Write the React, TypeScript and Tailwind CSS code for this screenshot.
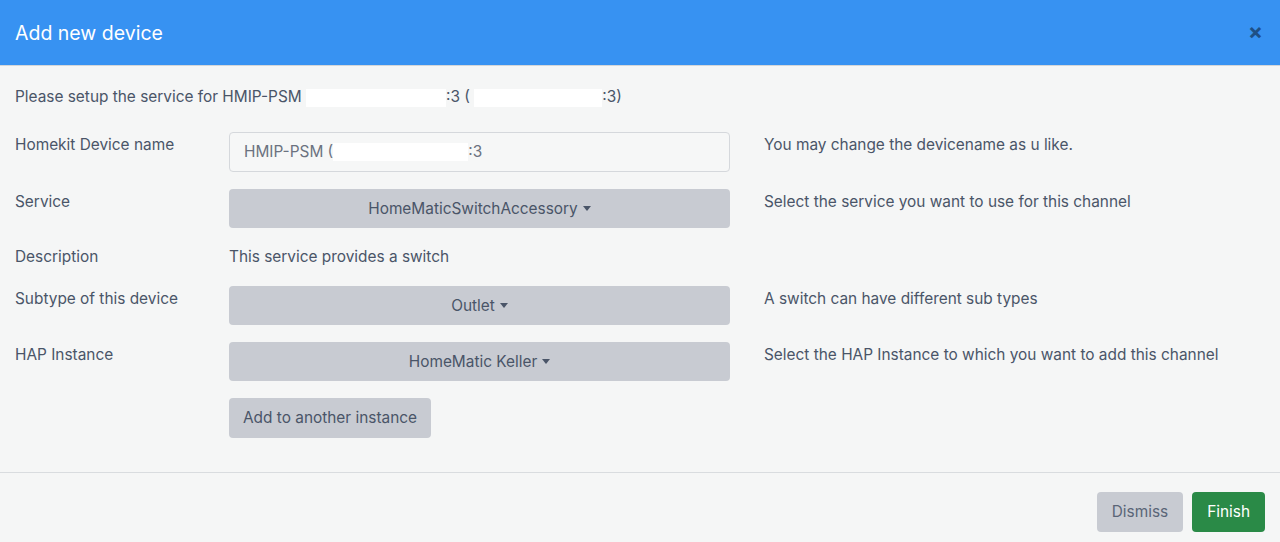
import React from 'react';

const Redacted: React.FC<{ w: number }> = ({ w }) => (
  <span className="inline-block h-[18px] bg-white align-middle" style={{ width: w }} />
);

const Caret = () => (
  <span className="ml-[5px] inline-block h-0 w-0 border-x-[4.5px] border-t-[5px] border-x-transparent border-t-[#4a5568] align-middle" />
);

const SelectButton: React.FC<{ label: string }> = ({ label }) => (
  <button className="flex h-[39px] w-full items-center justify-center rounded-[4px] bg-[#c8cbd2] text-[15.4px] text-[#4a5568]">
    {label}
    <Caret />
  </button>
);

const Row: React.FC<{ label: string; help?: string; children: React.ReactNode }> = ({ label, help, children }) => (
  <div className="grid grid-cols-[214px_501px_1fr] items-start leading-6">
    <div className="pt-[1px]">{label}</div>
    <div>{children}</div>
    <div className="pl-[34px] pt-[1px]">{help}</div>
  </div>
);

const App: React.FC = () => {
  return (
    <div className="flex h-[542px] w-[1280px] flex-col bg-[#f5f6f6] font-['Inter',sans-serif] text-[15.4px] text-[#4a5568]">
      <header className="flex h-[66px] shrink-0 items-center justify-between border-b border-[#d3d6d9] bg-[#3792f2] px-[15px]">
        <h1 className="mt-[3px] text-[19.5px] font-normal text-white">Add new device</h1>
        <span className="mb-[4px] mr-[2px] text-[22px] font-bold leading-none text-[#1e4f85]">×</span>
      </header>

      <main className="flex flex-1 flex-col gap-[17px] px-[15px] pt-[19px]">
        <p className="mb-[6px] leading-6">
          Please setup the service for HMIP-PSM <Redacted w={140} />:3 ( <Redacted w={128} />:3)
        </p>

        <Row label="Homekit Device name" help="You may change the devicename as u like.">
          <div className="flex h-[40px] items-center rounded-[4px] border border-[#d5d8dc] bg-[#f6f7f7] px-[14px] text-[#6b7280]">
            HMIP-PSM (<Redacted w={135} />:3
          </div>
        </Row>

        <Row label="Service" help="Select the service you want to use for this channel">
          <SelectButton label="HomeMaticSwitchAccessory" />
        </Row>

        <div className="grid h-[24px] grid-cols-[214px_501px_1fr] items-center leading-6">
          <div>Description</div>
          <div>This service provides a switch</div>
          <div />
        </div>

        <Row label="Subtype of this device" help="A switch can have different sub types">
          <SelectButton label="Outlet" />
        </Row>

        <Row label="HAP Instance" help="Select the HAP Instance to which you want to add this channel">
          <SelectButton label="HomeMatic Keller" />
        </Row>

        <Row label="">
          <button className="h-[40px] rounded-[4px] bg-[#c8cbd2] px-[14px] text-[#4a5568]">
            Add to another instance
          </button>
        </Row>
      </main>

      <footer className="flex h-[70px] shrink-0 items-start justify-end gap-[9px] border-t border-[#d9dcdf] px-[15px] pt-[19px]">
        <button className="h-[40px] rounded-[4px] bg-[#c8cbd2] px-[15px] text-[#5a6577]">Dismiss</button>
        <button className="h-[40px] rounded-[4px] bg-[#2a8a47] px-[15px] text-white">Finish</button>
      </footer>
    </div>
  );
};

export default App;
